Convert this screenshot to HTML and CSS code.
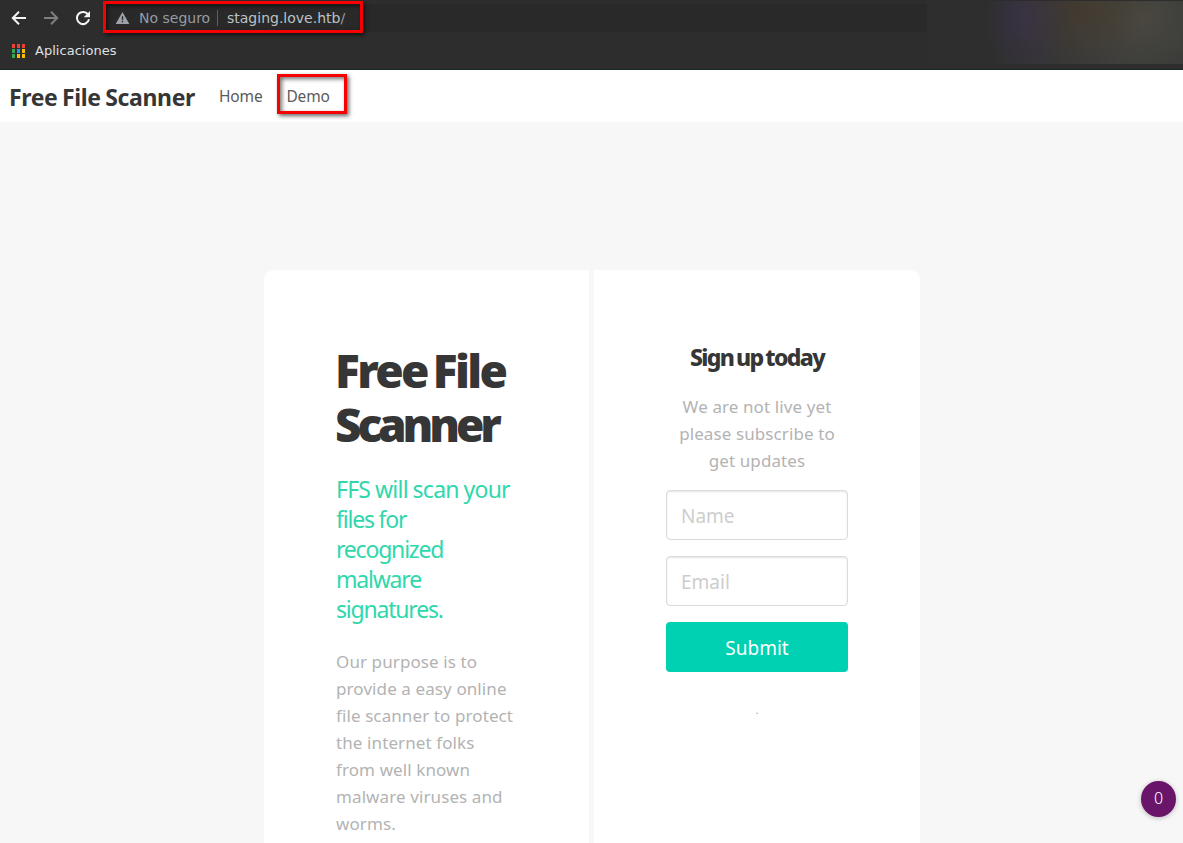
FILE: index.html
```html
<!DOCTYPE html>
<html lang="es">
<head>
<meta charset="utf-8">
<title>Free File Scanner</title>
<link rel="stylesheet" href="styles.css">
</head>
<body>
<header class="browser">
  <div class="toolbar">
    <svg class="nav-icon" viewBox="0 0 16 16"><path d="M15 8H2.2M8 1.8 1.8 8 8 14.2"/></svg>
    <svg class="nav-icon dim" viewBox="0 0 16 16"><path d="M1 8h12.8M8 1.8 14.2 8 8 14.2"/></svg>
    <svg class="nav-icon" viewBox="0 0 16 16"><path d="M13.3 4.9A6.1 6.1 0 1 0 14 9.3"/><path class="solid" d="M15 1v6.3H8.7z"/></svg>
    <div class="address">
      <div class="mark url-mark">
        <svg class="warn" viewBox="0 0 16 14"><path d="M8 0 16 14H0z"/><path class="bang" d="M7.2 5h1.6v4H7.2zM7.2 10.3h1.6V12H7.2z"/></svg>
        <span class="insecure">No seguro</span>
        <i class="divider"></i>
        <span class="url">staging.love.htb<span class="slash">/</span></span>
      </div>
    </div>
    <div class="glow"></div>
  </div>
  <div class="bookmarks">
    <div class="apps"><i class="r"></i><i class="r"></i><i class="r"></i><i class="g"></i><i class="b"></i><i class="y"></i><i class="g"></i><i class="y"></i><i class="y"></i></div>
    <span class="apps-label">Aplicaciones</span>
  </div>
</header>
<nav class="navbar">
  <span class="brand">Free File Scanner</span>
  <a class="home">Home</a>
  <a class="mark demo">Demo</a>
</nav>
<main class="stage">
  <section class="panel left">
    <h1 class="title">Free File<br><span class="tight">Scanner</span></h1>
    <h2 class="subtitle"><span class="wide">FFS will scan your</span><br>files for<br>recognized<br>malware<br>signatures.</h2>
    <p class="copy">Our purpose is to<br>provide a easy online<br>file scanner to protect<br>the internet folks<br>from well known<br>malware viruses and<br>worms.</p>
  </section>
  <section class="panel right">
    <h2 class="signup">Sign up today</h2>
    <p class="copy">We are not live yet<br>please subscribe to<br>get updates</p>
    <form class="form">
      <input class="field" placeholder="Name">
      <input class="field" placeholder="Email">
      <button class="submit" type="button">Submit</button>
    </form>
    <small class="note">.</small>
  </section>
</main>
<div class="counter">0</div>
</body>
</html>
```
FILE: styles.css
```css
* { box-sizing: border-box; margin: 0; padding: 0; }
body { width: 1183px; height: 843px; overflow: hidden; background: #f7f7f7; font-family: "Noto Sans", sans-serif; color: #363636; display: flex; flex-direction: column; }
.browser { position: relative; flex: none; height: 70px; background: #2d2d2d; border-bottom: 1px solid #15292b; font-family: "DejaVu Sans", sans-serif; }
.toolbar { display: flex; align-items: flex-start; height: 36px; padding-left: 11px; }
.nav-icon { flex: none; width: 16px; height: 16px; margin: 10px 16px 0 0; fill: none; stroke: #f4f4f4; stroke-width: 2; }
.nav-icon .solid { fill: #f4f4f4; stroke: none; }
.nav-icon.dim { stroke: #7f7f7f; }
.address { width: 824px; height: 28px; margin: 4px 0 0 -4px; background: #292929; }
.mark { border: 3px solid #f90000; box-shadow: 2px 2px 4px rgba(0,0,0,.6), inset 2px 2px 4px rgba(0,0,0,.55); }
.url-mark { position: relative; display: flex; align-items: center; width: 260px; height: 32px; margin-top: -3px; padding: 2px 0 0 9px; font-size: 14px; white-space: nowrap; }
.warn { width: 15px; height: 12px; margin-right: 9px; fill: #9da2a8; }
.warn .bang { fill: #292929; }
.insecure { width: 78px; color: #969ca3; }
.divider { width: 1px; height: 16px; margin-right: 9px; background: #5f6062; }
.url { color: #bdc1c6; }
.slash { color: #969ca3; }
.glow { position: absolute; left: 927px; top: 1px; right: 0; height: 63px; background: radial-gradient(ellipse 42px 58px at 98px 18px, rgba(62,50,85,.5), transparent), radial-gradient(ellipse 75px 60px at 155px 8px, rgba(70,58,43,.65), transparent), radial-gradient(ellipse 75px 65px at 215px 18px, rgba(76,75,66,.85), transparent), linear-gradient(90deg, #2e2e2e 0 25%, #3a3a3a 60%, #393938); }
.bookmarks { display: flex; align-items: center; height: 29px; padding-left: 12px; }
.apps { display: grid; grid-template-columns: repeat(3, 3px); gap: 1px 2px; width: 14px; margin-right: 9px; }
.apps i { height: 4px; }
.r { background: #ea4335; }
.g { background: #34a853; }
.b { background: #2196f3; }
.y { background: #fbbc05; }
.apps-label { color: #dfe0e1; font-size: 13px; letter-spacing: .03px; }
.navbar { flex: none; display: flex; align-items: flex-start; height: 52px; padding-left: 9px; background: #fff; white-space: nowrap; }
.brand { width: 210px; font-size: 23px; font-weight: 700; line-height: 54px; letter-spacing: -.37px; word-spacing: -1px; }
.home { width: 58px; font-size: 15.5px; font-weight: 400; line-height: 53px; letter-spacing: -.15px; color: #5a5a5a; }
.demo { width: 70px; height: 40px; margin-top: 4px; padding-left: 6.5px; font-size: 15.5px; font-weight: 400; line-height: 39px; letter-spacing: -.2px; color: #5a5a5a; }
.stage { flex: 1; min-height: 0; display: flex; gap: 5px; padding: 148px 263px 0 264px; }
.panel { padding: 72px 72px 0; background: #fff; white-space: nowrap; }
.left { width: 325px; border-radius: 10px 0 0 0; }
.right { width: 326px; border-radius: 0 10px 0 0; text-align: center; }
.title { margin-left: -1px; padding-top: 1px; font-size: 46px; font-weight: 900; line-height: 54px; letter-spacing: -2.6px; word-spacing: -3.5px; }
.tight { letter-spacing: -4.15px; }
.subtitle { margin-top: 23px; font-size: 23px; font-weight: 400; line-height: 30px; letter-spacing: -1.2px; color: #2fd8ac; }
.wide { letter-spacing: -.75px; word-spacing: -.5px; }
.copy { margin-top: 24px; font-size: 17px; font-weight: 400; line-height: 27px; letter-spacing: .1px; color: #b3b3b3; }
.signup { font-size: 23px; font-weight: 800; line-height: 30px; letter-spacing: -1.65px; word-spacing: -1.5px; }
.right .copy { margin-top: 21px; }
.form { display: flex; flex-direction: column; gap: 16px; margin-top: 16px; }
.field, .submit { width: 182px; height: 50px; border-radius: 4px; font: 400 19px/48px "Noto Sans", sans-serif; }
.field { padding: 1px 14px 0; border: 1px solid #dbdbdb; background: #fff; box-shadow: inset 0 1px 2px rgba(10,10,10,.1); }
.field::placeholder { color: #cdcdcd; }
.submit { padding-top: 1px; border: 0; background: #00d1b2; color: #fff; }
.note { display: block; margin-top: 29px; font-size: 10px; line-height: 18px; color: #999; }
.counter { position: absolute; left: 1141px; top: 781px; width: 35px; height: 36px; border-radius: 50%; background: #68156a; box-shadow: 0 1px 5px rgba(0,0,0,.25); color: #fff; font-size: 16px; font-weight: 300; line-height: 35px; text-align: center; }
```
